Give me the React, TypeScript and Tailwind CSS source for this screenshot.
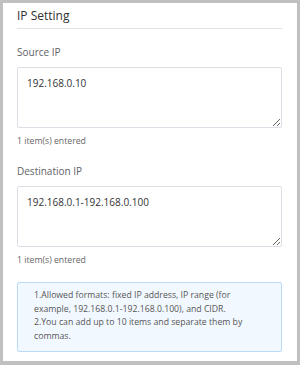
import { useState } from 'react'

function IpField({ label, value }: { label: string; value: string }) {
  const [text, setText] = useState(value)
  const count = text.split(',').filter((s) => s.trim()).length

  return (
    <div>
      <label className="block text-[10px] leading-[14px] text-[#606266]">{label}</label>
      <textarea
        value={text}
        onChange={(e) => setText(e.target.value)}
        className="mt-[8px] block w-full h-[61px] border border-[#dcdfe6] rounded-[2px] px-[9px] py-[8px] text-[10px] leading-[14px] text-[#333] outline-none resize-y"
      />
      <p className="mt-[7px] text-[8.7px] leading-[12px] text-[#666]">{count} item(s) entered</p>
    </div>
  )
}

export default function App() {
  return (
    <div className="w-[300px] h-[365px] bg-[#c0c0c0] pt-[3px] px-[3px] pb-[4px] font-['Open_Sans',sans-serif]">
      <div className="h-full bg-white pl-[14px] pr-[15px] pt-[5px]">
        <h3 className="text-[12px] leading-[16px] text-[#303133] pb-[4px] border-b border-[#dfe2e8]">IP Setting</h3>

        <div className="mt-[16px] space-y-[17px]">
          <IpField label="Source IP" value="192.168.0.10" />
          <IpField label="Destination IP" value="192.168.0.1-192.168.0.100" />
        </div>

        <div className="mt-[16px] border border-[#b9dbf7] bg-[#f2f8ff] rounded-[2px] px-[16px] pt-[6px] pb-[8px] text-[8.7px] leading-[13.5px] text-[#555]">
          <p>1.Allowed formats: fixed IP address, IP range (for example, 192.168.0.1-192.168.0.100), and CIDR.</p>
          <p>2.You can add up to 10 items and separate them by commas.</p>
        </div>
      </div>
    </div>
  )
}
